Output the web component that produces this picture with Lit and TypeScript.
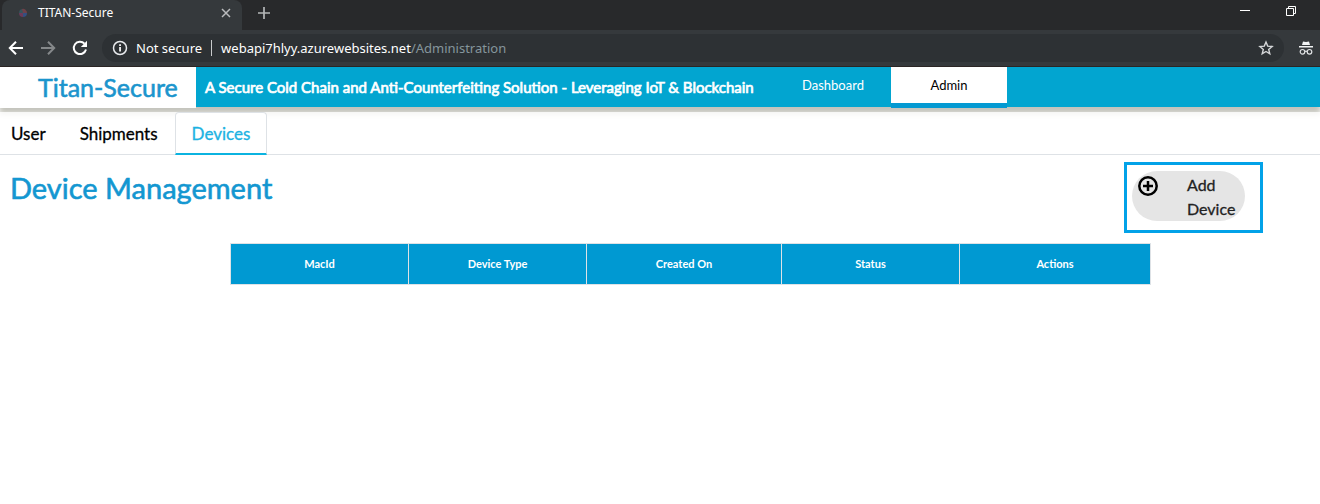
import { LitElement, html, css } from "lit";
import { customElement, property } from "lit/decorators.js";

@customElement("browser-chrome")
class BrowserChrome extends LitElement {
  static styles = css`
    :host { display: block; position: relative; z-index: 1; background: #35393c; border-bottom: 1px solid #2b2524; font-family: "Noto Sans", sans-serif; color: #fff; }
    button { appearance: none; background: none; border: 0; margin: 0; padding: 0; color: inherit; font: inherit; display: block; }
    svg { display: block; }
    .strip { height: 30px; display: flex; align-items: stretch; background: #28292b; }
    .lead { width: 2px; background: #28292b; }
    .tab { width: 240px; box-sizing: border-box; display: flex; align-items: center; padding: 0 11px 4px 15px; background: #35393c; border-radius: 8px 8px 0 0; font-size: 12px; line-height: 16px; }
    .name { flex: 1; padding-left: 9px; }
    .add { margin: 0 0 4px 16px; color: #b4b6b8; }
    .window { margin-left: auto; display: flex; align-items: center; gap: 36px; padding: 0 24px 9px 0; }
    .bar { height: 36px; display: flex; align-items: center; }
    .tools { display: flex; gap: 16px; padding: 0 14px 0 8px; }
    .dim { color: #85888a; }
    .omni { flex: 1; height: 28px; margin-bottom: 1px; border-radius: 14px; background: #2d3134; display: flex; align-items: center; font-size: 13px; line-height: 18px; padding: 0 10px; }
    .secure { padding: 0 9px 0 8px; }
    .rule { width: 1px; height: 16px; background: #c9cbcc; margin-right: 9px; }
    .url { flex: 1; outline: 0; white-space: nowrap; }
    .path { color: #85969c; }
    .incog { padding: 0 7px 0 15px; }
  `;

  render() {
    return html`
      <div class="strip">
        <div class="lead"></div>
        <div class="tab">
          <svg width="12" height="12" viewBox="0 0 12 12" fill="none">
            <path d="M2 6a4 4 0 0 1 4-4v4z" fill="#35545c" />
            <path d="M5 2a4 4 0 0 1 5 4H6z" fill="#6e4148" />
            <path d="M2 6h4v4a4 4 0 0 1-4-4z" fill="#6b3a58" />
            <path d="M6 6h4a4 4 0 0 1-4 4z" fill="#344f80" />
          </svg>
          <span class="name">TITAN-Secure</span>
          <button aria-label="Close tab">
            <svg width="10" height="10" viewBox="0 0 10 10" stroke="#b9bbbd" stroke-width="1.5"><path d="M1 1l8 8M9 1L1 9" /></svg>
          </button>
        </div>
        <button class="add" aria-label="New tab">
          <svg width="12" height="12" viewBox="0 0 12 12" stroke="currentColor" stroke-width="1.7"><path d="M6 0v12M0 6h12" /></svg>
        </button>
        <div class="window">
          <button aria-label="Minimize"><svg width="10" height="10" viewBox="0 0 10 10"><path d="M0 4h10v1H0z" fill="#fff" /></svg></button>
          <button aria-label="Restore">
            <svg width="10" height="10" viewBox="0 0 10 10" fill="none" stroke="#fff"><path d="M.5 2.5h7v7h-7zM2.500 2.500v-2h7v7h-2" /></svg>
          </button>
        </div>
      </div>
      <div class="bar">
        <div class="tools">
          <button aria-label="Back"><svg width="16" height="16" viewBox="0 0 16 16" fill="none" stroke="#fff" stroke-width="2"><path d="M15 8H2.500M8 1.800L1.800 8 8 14.200" /></svg></button>
          <button class="dim" aria-label="Forward"><svg width="16" height="16" viewBox="0 0 16 16" fill="none" stroke="currentColor" stroke-width="2"><path d="M1 8h12.500M8 1.800L14.200 8 8 14.200" /></svg></button>
          <button aria-label="Reload"><svg width="16" height="16" viewBox="0 0 16 16"><path d="M14 9.500A6.200 6.200 0 1 1 12.500 3.600" fill="none" stroke="#fff" stroke-width="2" /><path d="M15 .8V7H8.800z" fill="#fff" /></svg></button>
        </div>
        <div class="omni">
          <svg width="16" height="16" viewBox="0 0 16 16"><circle cx="8" cy="8" r="6.500" fill="none" stroke="#e8eaed" stroke-width="1.500" /><path d="M7.200 7h1.700v4.500H7.200zM7.200 4.300h1.700V6H7.200z" fill="#fff" /></svg>
          <span class="secure">Not secure</span>
          <span class="rule"></span>
          <div class="url" role="textbox" aria-label="Address" contenteditable="true">webapi7hlyy.azurewebsites.net<span class="path">/Administration</span></div>
          <button aria-label="Bookmark"><svg width="16" height="16" viewBox="0 0 16 16" fill="none" stroke="#d5d7d9" stroke-width="1.400"><path d="M8 2l1.700 4.100 4.400.4-3.400 2.900 1.100 4.400L8 11.500l-3.800 2.300 1.100-4.400-3.400-2.900 4.400-.4z" /></svg></button>
        </div>
        <div class="incog">
          <svg width="14" height="14" viewBox="0 0 14 14"><path d="M4 0.500l3 .6 3-.6 1 3.500H3zM0 5h14v1.400H0z" fill="#f1f3f4" /><g fill="none" stroke="#e0e2e4" stroke-width="1.200"><circle cx="3.500" cy="10.800" r="2.300" /><circle cx="10.500" cy="10.800" r="2.300" /><path d="M5.800 10.500q1.200-.8 2.400 0" /></g></svg>
        </div>
      </div>
    `;
  }
}

@customElement("site-header")
class SiteHeader extends LitElement {
  static styles = css`
    :host { display: flex; height: 40px; background: #02a5d0; box-shadow: 0 6px 6px 1px #c4c4bc; font-family: Lato, sans-serif; color: #fff; }
    .logo { width: 196px; height: 41px; box-sizing: border-box; padding-left: 38px; background: #fff; color: #1b95cd; font: 400 25px/41px Lato, sans-serif; -webkit-text-stroke: 0.6px; white-space: nowrap; }
    .tagline { width: 570px; padding-left: 9px; font-size: 15px; line-height: 40px; -webkit-text-stroke: 0.7px; white-space: nowrap; }
    nav { display: flex; }
    a { box-sizing: border-box; width: 116px; height: 41px; text-align: center; text-decoration: none; color: inherit; font-size: 13px; line-height: 37px; }
    .active { background: #fff; color: #000; border-bottom: 5px solid #0399d2; }
  `;

  render() {
    return html`
      <div class="logo">Titan-Secure</div>
      <div class="tagline">A Secure Cold Chain and Anti-Counterfeiting Solution - Leveraging IoT &amp; Blockchain</div>
      <nav><a href="#dashboard">Dashboard</a><a class="active" href="#admin">Admin</a></nav>
    `;
  }
}

@customElement("admin-tabs")
class AdminTabs extends LitElement {
  @property() active = "Devices";

  static styles = css`
    :host { display: flex; position: relative; margin-top: 5px; background: rgba(255, 255, 255, 0.8); border-bottom: 1px solid #dee2e6; padding-right: 10px; font-family: Lato, sans-serif; }
    a { box-sizing: border-box; height: 43px; margin-bottom: -1px; padding: 0 16px; border: 1px solid transparent; border-radius: 4px 4px 0 0; color: #000; font-size: 17px; line-height: 41px; text-decoration: none; -webkit-text-stroke: 0.3px; }
    a:first-child { padding-left: 10px; }
    .active { border: 1px solid #dee2e6; border-bottom: 2px solid #0bb3e0; background: #fff; color: #1cb2e2; }
  `;

  render() {
    return ["User", "Shipments", "Devices"].map(
      (name) => html`<a href="#${name.toLowerCase()}" class=${name === this.active ? "active" : ""}>${name}</a>`
    );
  }
}

@customElement("device-page")
class DevicePage extends LitElement {
  static styles = css`
    :host { display: block; font-family: Lato, sans-serif; }
    .top { display: flex; justify-content: space-between; align-items: flex-start; padding: 7px 57px 0 10px; }
    h1 { margin: 8px 0 0; color: #1397d1; font-size: 29px; line-height: 36px; font-weight: 400; -webkit-text-stroke: 0.6px; }
    .frame { border: 3px solid #02a2e8; padding: 6px 15px 9px 5px; }
    button { appearance: none; box-sizing: border-box; display: flex; align-items: flex-start; gap: 28px; width: 113px; height: 50px; padding: 2px 0 0 5px; margin: 0; border: 0; border-radius: 25px; background: #e5e5e5; color: #222; font: 400 16px/24px Lato, sans-serif; text-align: left; -webkit-text-stroke: 0.3px; }
    svg { flex: none; margin-top: 2px; }
    .grid { margin: 10px 169px 0 230px; }
    table { width: 100%; border-collapse: collapse; table-layout: fixed; }
    th { box-sizing: border-box; height: 41px; padding: 0; border: 1px solid #dee2e6; background: #0099d2; color: #fff; font-size: 11px; line-height: 16px; font-weight: 700; }
    .wide { width: 195px; }
    .last { width: 191px; }
  `;

  render() {
    return html`
      <div class="top">
        <h1>Device Management</h1>
        <div class="frame">
          <button>
            <svg width="22" height="22" viewBox="0 0 22 22" fill="none" stroke="#000" stroke-width="2.500"><circle cx="11" cy="11" r="8.700" /><path d="M11 6v10M6 11h10" /></svg>
            <span>Add<br />Device</span>
          </button>
        </div>
      </div>
      <div class="grid">
        <table>
          <thead>
            <tr><th>MacId</th><th>Device Type</th><th class="wide">Created On</th><th>Status</th><th class="last">Actions</th></tr>
          </thead>
        </table>
      </div>
    `;
  }
}

@customElement("app-root")
class AppRoot extends LitElement {
  static styles = css`
    :host { display: block; min-height: 100vh; background: #fff; }
  `;

  render() {
    return html`
      <browser-chrome></browser-chrome>
      <site-header></site-header>
      <admin-tabs></admin-tabs>
      <device-page></device-page>
    `;
  }
}
